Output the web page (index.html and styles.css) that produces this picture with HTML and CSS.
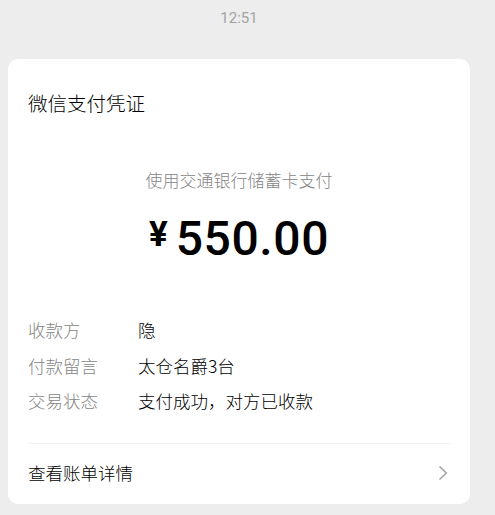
FILE: index.html
```html
<!DOCTYPE html>
<html lang="zh-CN">
<head>
<meta charset="utf-8">
<title>微信支付凭证</title>
<link rel="stylesheet" href="styles.css">
</head>
<body>
<div class="page">
  <div class="time">12:51</div>
  <div class="card">
    <div class="title">微信支付凭证</div>
    <div class="subtitle">使用交通银行储蓄卡支付</div>
    <div class="amount"><span class="yen">¥</span><span class="num">550.00</span></div>
    <div class="rows">
      <div class="row"><span class="label">收款方</span><span class="value">隐</span></div>
      <div class="row"><span class="label">付款留言</span><span class="value">太仓名爵3台</span></div>
      <div class="row"><span class="label">交易状态</span><span class="value">支付成功，对方已收款</span></div>
    </div>
    <div class="footer">
      <span class="link">查看账单详情</span>
      <svg class="chev" width="10" height="16" viewBox="0 0 10 16"><polyline points="1.5,1.5 8.3,8 1.5,14.5" fill="none" stroke="#a3a3a3" stroke-width="1.6"/></svg>
    </div>
  </div>
</div>
</body>
</html>
```
FILE: styles.css
```css
html, body {
  margin: 0;
  padding: 0;
  background: #ededed;
}
body {
  font-family: "Noto Sans CJK SC", "Noto Sans", sans-serif;
  font-weight: 300;
  width: 495px;
  height: 515px;
  overflow: hidden;
}
.page {
  width: 462px;
  margin-left: 8px;
}
.time {
  font-family: Roboto, "Noto Sans", sans-serif;
  font-weight: 400;
  font-size: 15px;
  line-height: 36px;
  color: #a3a3a3;
  text-align: center;
}
.card {
  margin-top: 23px;
  background: #fff;
  border-radius: 10px;
  padding: 0 20px;
  height: 445px;
  box-sizing: border-box;
}
.title {
  padding-top: 30px;
  font-size: 19.5px;
  line-height: 28px;
  color: #000;
}
.subtitle {
  margin-top: 51px;
  text-align: center;
  font-size: 17px;
  line-height: 24px;
  color: #858585;
}
.amount {
  margin-top: 17px;
  display: flex;
  justify-content: center;
  height: 60px;
  font-family: Roboto, "Noto Sans", sans-serif;
  color: #000;
}
.yen {
  font-size: 35px;
  line-height: 52px;
  font-weight: 700;
  margin-right: 8px;
  align-self: flex-start;
}
.num {
  font-size: 48px;
  line-height: 60px;
  font-weight: 500;
  letter-spacing: 0.6px;
}
.rows {
  margin-top: 43px;
}
.row {
  display: flex;
  font-size: 17.5px;
  line-height: 35.5px;
}
.label {
  width: 110px;
  color: #858585;
}
.value {
  color: #000;
}
.footer {
  margin-top: 24px;
  border-top: 1px solid #efefef;
  height: 59px;
  display: flex;
  align-items: center;
  justify-content: space-between;
  font-size: 17.5px;
  color: #000;
}
.link {
  margin-top: -2px;
}
.chev {
  margin-right: 2px;
}
```
